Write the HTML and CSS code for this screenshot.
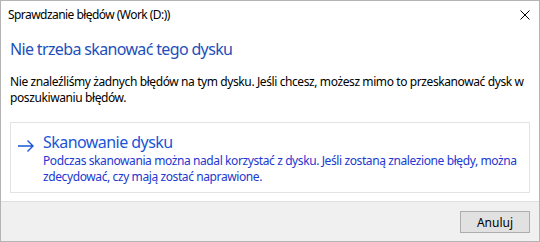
FILE: index.html
```html
<!DOCTYPE html>
<html>
<head>
    <meta charset="utf-8">
    <title>Sprawdzanie błędów (Work (D:))</title>
    <link rel="stylesheet" href="styles.css">
</head>
<body>
<div class="window">

    <div class="title-bar">
        <span class="title-text">Sprawdzanie błędów (Work (D:))</span>
        <svg class="close-icon" width="10" height="10" viewBox="0 0 10 10">
            <path d="M0.5 0.5 L9.5 9.5 M9.5 0.5 L0.5 9.5" stroke="#000" stroke-width="1" fill="none"/>
        </svg>
    </div>

    <div class="content">

        <h1 class="main-instruction">Nie trzeba skanować tego dysku</h1>

        <p class="message">Nie znaleźliśmy żadnych błędów na tym dysku. Jeśli chcesz, możesz mimo to przeskanować dysk w poszukiwaniu błędów.</p>

        <div class="command-link">
            <svg class="arrow-icon" width="16" height="12" viewBox="0 0 16 12">
                <path d="M0 6 H15 M9.5 0.5 L15 6 L9.5 11.5" stroke="#1a55d6" stroke-width="1.4" fill="none"/>
            </svg>
            <div>
                <div class="command-title">Skanowanie dysku</div>
                <div class="command-note">Podczas skanowania można nadal korzystać z dysku. Jeśli zostaną znalezione błędy, można zdecydować, czy mają zostać naprawione.</div>
            </div>
        </div>

    </div>

    <div class="footer">
        <button class="cancel-button">Anuluj</button>
    </div>

</div>
</body>
</html>
```

FILE: styles.css
```css
* {
    box-sizing: border-box;
}

body {
    margin: 0;
    font-family: "Noto Sans", "Open Sans", sans-serif;
    font-size: 12px;
    letter-spacing: -0.4px;
    color: #000;
    background: #fff;
}

.window {
    width: 540px;
    height: 242px;
    border: 1px solid #b4b4b4;
    display: flex;
    flex-direction: column;
    background: #fff;
}

.title-bar {
    height: 27px;
    display: flex;
    align-items: center;
    justify-content: space-between;
    padding: 0 9px 0 7px;
}

.title-text {
    font-size: 12px;
    line-height: 16px;
    letter-spacing: -0.55px;
}

.close-icon {
    display: block;
}

.content {
    flex: 1;
    padding: 0 9px 0 9px;
}

.main-instruction {
    margin: 10px 0 0 0;
    font-size: 16px;
    font-weight: normal;
    line-height: 22px;
    letter-spacing: -0.65px;
    color: #1e4fba;
}

.message {
    margin: 14px 0 0 0;
    line-height: 16px;
}

.command-link {
    margin-top: 16px;
    height: 71px;
    border: 1px solid #e3e3e3;
    display: flex;
    padding: 8px 8px 0 7px;
}

.arrow-icon {
    margin-top: 9px;
    margin-right: 9px;
    flex-shrink: 0;
}

.command-title {
    font-size: 16px;
    line-height: 22px;
    letter-spacing: -0.55px;
    color: #1a55d6;
}

.command-note {
    line-height: 16px;
    color: #2238d0;
}

.footer {
    height: 40px;
    background: #f0f0f0;
    border-top: 1px solid #dfdfdf;
    display: flex;
    justify-content: flex-end;
    align-items: center;
    padding-right: 9px;
}

.cancel-button {
    width: 70px;
    height: 22px;
    margin-top: 1px;
    background: #e1e1e1;
    border: 1px solid #adadad;
    font-family: "Noto Sans", "Open Sans", sans-serif;
    font-size: 12px;
    color: #000;
    padding: 0;
}
```
